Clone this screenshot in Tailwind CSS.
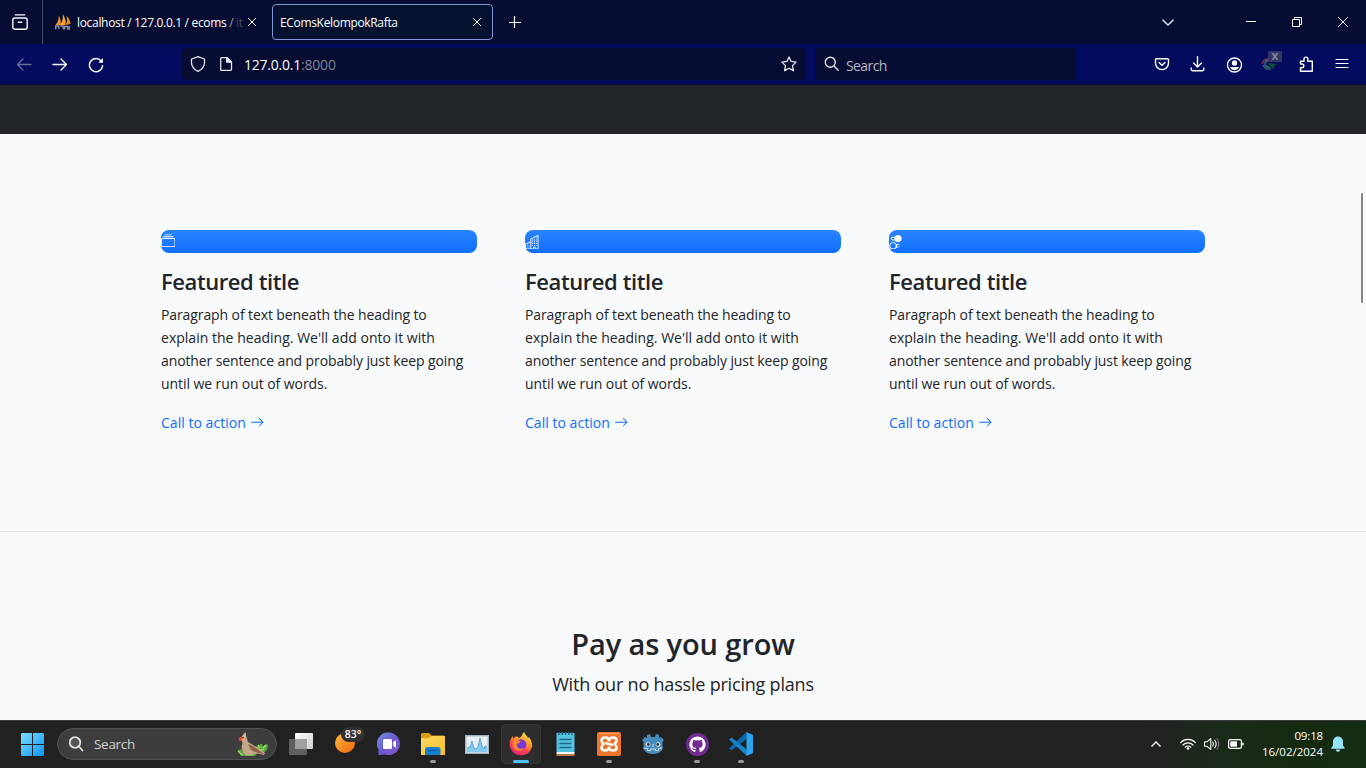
<!DOCTYPE html>
<html lang="en">
<head>
<meta charset="utf-8">
<title>EComsKelompokRafta</title>
<script src="https://cdn.jsdelivr.net/npm/@tailwindcss/browser@4"></script>
</head>
<body class="w-[1366px] h-[768px] overflow-hidden flex flex-col bg-[#f9fafc] font-['Open_Sans','Noto_Sans',sans-serif] text-[#212529]">

<svg class="hidden">
  <symbol id="x" viewBox="0 0 10 10"><path d="M1 1l8 8M9 1l-8 8" stroke="currentColor" fill="none"/></symbol>
  <symbol id="arrow" viewBox="0 0 16 16"><path fill="currentColor" fill-rule="evenodd" d="M1 8a.5.5 0 0 1 .5-.5h11.793l-3.147-3.146a.5.5 0 0 1 .708-.708l4 4a.5.5 0 0 1 0 .708l-4 4a.5.5 0 0 1-.708-.708L13.293 8.5H1.5A.5.5 0 0 1 1 8z"/></symbol>
</svg>

<!-- Tab strip -->
<header class="h-11 shrink-0 flex items-center bg-[#070c33] text-white text-[12px]">
  <div class="w-[43px] h-full border-r border-[#474b68] flex items-center pl-3">
    <svg class="w-4 h-4" viewBox="0 0 16 16" fill="none" stroke="#fbfbfe" stroke-width="1.4" stroke-linecap="round"><path d="M3.2.8h9.6" stroke-width="1.3"/><rect x=".8" y="4" width="14.4" height="11.2" rx="2"/><path d="M6.3 8.2h3.4" stroke-width="1.6"/></svg>
  </div>
  <div class="w-[221px] h-full flex items-center pl-3">
    <svg class="w-4 h-4 shrink-0" viewBox="0 0 16 16"><path d="M.5 11Q4 7 3.800 1.500 6.500 7 5.500 11z" fill="#f39324"/><path d="M5 11Q8.500 6 7.800 0 11.500 6 10.500 11z" fill="#f7a234"/><path d="M10.500 11Q12.800 7 11.500 1.500 15.500 6 15.500 10z" fill="#e28a20"/><path d="M.7 15.500v-3.500h3v3m1.500-3h3v3.500m1.500 0v-3h3v3m1.500-3.500v3h1" stroke="#9395a4" stroke-width="1.300" fill="none"/></svg>
    <div class="ml-[6px] pt-[2px] w-[165px] shrink-0 whitespace-nowrap tracking-[-0.32px]">localhost / 127.0.0.1 / ecoms<span class="text-white/60"> / </span><span class="text-white/25">it</span></div>
    <svg class="w-[10px] h-[10px] ml-[5px] shrink-0"><use href="#x"/></svg>
  </div>
  <div class="ml-2 w-[221px] h-9 rounded-[4px] border border-[#7c96d8] bg-[#05122f] flex items-center pl-[7px]">
    <span class="w-[192px] pt-[2px] tracking-[-0.33px]">EComsKelompokRafta</span>
    <svg class="w-[10px] h-[10px]"><use href="#x"/></svg>
  </div>
  <svg class="ml-4 w-3 h-3" viewBox="0 0 12 12"><path d="M5.500 0v12M0 6.500h12" stroke="#fff" stroke-width="1.200"/></svg>
  <svg class="ml-auto w-3 h-[7px]" viewBox="0 0 12 7"><path d="M.5.700L6 6 11.500.700" fill="none" stroke="#e5e6ef" stroke-width="1.400"/></svg>
  <svg class="ml-[72px] w-[10px] h-[10px]" viewBox="0 0 10 10"><path d="M0 4.500h10" stroke="#fff"/></svg>
  <svg class="ml-9 w-[10px] h-[10px]" viewBox="0 0 10 10" fill="none" stroke="#fff"><path d="M.500 2.500h7v7h-7zM2.500 2.500v-2h7v7h-2"/></svg>
  <svg class="ml-9 mr-[18px] w-[10px] h-[10px]" viewBox="0 0 10 10"><path d="M0 0l10 10M10 0L0 10" stroke="#fff" stroke-width=".900"/></svg>
</header>

<!-- Navigation bar -->
<nav class="h-[40px] shrink-0 flex items-center bg-[#030b5e] text-[14px] text-[#fbfbfe]">
  <svg class="ml-4 w-4 h-4 opacity-40" viewBox="0 0 16 16" fill="none" stroke="#fff" stroke-width="1.300" stroke-linecap="round" stroke-linejoin="round"><path d="M15 8.500H1.500M7 3L1.500 8.500 7 14"/></svg>
  <svg class="ml-5 w-4 h-4" viewBox="0 0 16 16" fill="none" stroke="#fff" stroke-width="1.300" stroke-linecap="round" stroke-linejoin="round"><path d="M1 8.500h13.500M9 3L14.500 8.500 9 14"/></svg>
  <svg class="ml-5 mt-[1px] w-4 h-4" viewBox="0 0 16 16" fill="none" stroke="#fff" stroke-width="1.400" stroke-linecap="round"><path d="M13.200 4A6.600 6.600 0 1 0 14.600 8.600"/><path d="M15 1v4.700h-4.700z" fill="#fff" stroke="none"/></svg>
  <div class="ml-[78px] w-[623px] h-8 rounded-[4px] bg-[#070c33] flex items-center pl-2">
    <svg class="w-4 h-4" viewBox="0 0 16 16" fill="none" stroke="#e4e5ee" stroke-width="1.300" stroke-linejoin="round"><path d="M8 .700l6.500 2.300v3.500c0 4-2.500 7-6.500 8.800C4 13.500 1.500 10.500 1.500 6.500V3z"/></svg>
    <svg class="ml-3 w-4 h-4" viewBox="0 0 16 16" fill="none" stroke="#e4e5ee" stroke-width="1.300" stroke-linejoin="round"><path d="M3.700 1.700H9l4.500 4.500v7.200a1 1 0 0 1-1 1H3.700a1 1 0 0 1-1-1V2.700a1 1 0 0 1 1-1z"/><path d="M8.700 1.700v4.500h4.800z" fill="#e4e5ee"/></svg>
    <span class="ml-[10px] pt-[1px] whitespace-nowrap tracking-[-0.22px]">127.0.0.1<span class="text-[#7f8298]">:8000</span></span>
    <svg class="ml-auto mr-2 w-4 h-4" viewBox="0 0 16 16" fill="none" stroke="#e4e5ee" stroke-width="1.300" stroke-linejoin="round"><path d="M8 .900l2.100 4.500 5 .700-3.600 3.500.900 5L8 12.200l-4.400 2.400.900-5L.900 6.100l5-.700z"/></svg>
  </div>
  <div class="ml-[10px] w-[261px] h-8 rounded-[4px] bg-[#070c33] flex items-center pl-[9px]">
    <svg class="w-4 h-4" viewBox="0 0 16 16" fill="none" stroke="#e4e5ee" stroke-width="1.400" stroke-linecap="round"><circle cx="6.300" cy="6.300" r="5"/><path d="M10 10l4.200 4.200"/></svg>
    <span class="ml-[6px] pt-[2px] tracking-[-0.6px] text-[14px] text-[#b4b5c2]">Search</span>
  </div>
  <svg class="ml-[78px] w-4 h-4" viewBox="0 0 16 16" fill="none" stroke="#fff" stroke-width="1.400" stroke-linecap="round" stroke-linejoin="round"><path d="M2.500 2.700h11a1 1 0 0 1 1 1v3.600a6.500 6.300 0 0 1-13 0V3.700a1 1 0 0 1 1-1zM5 6.500l3 2.800 3-2.800"/></svg>
  <svg class="ml-5 w-4 h-4" viewBox="0 0 16 16" fill="none" stroke="#fff" stroke-width="1.400" stroke-linecap="round" stroke-linejoin="round"><path d="M7.500.700v10M3.500 7l4 4 4-4M1.200 12v1.200a1.500 1.500 0 0 0 1.500 1.500h9.600a1.500 1.500 0 0 0 1.500-1.500V12"/></svg>
  <svg class="ml-5 mt-[1px] w-[17px] h-4" viewBox="0 0 16 16" fill="none" stroke="#fff"><circle cx="8" cy="8" r="7" stroke-width="1.300"/><circle cx="8" cy="6" r="2.700" fill="#fff" stroke="none"/><path d="M3.500 10h9c-.700 2-2.500 3.200-4.500 3.200S4.200 12 3.500 10z" fill="#fff" stroke="none"/></svg>
  <svg class="ml-[18px] w-[22px] h-[20px] mb-[7px]" viewBox="0 0 22 20"><path d="M7 8C4 8 1.500 10 1.500 13" stroke="#7c2c4c" stroke-width="1.800" fill="none"/><path d="M9 9Q4 9 4 13.500 5 17 9 16" fill="none" stroke="#35607d" stroke-width="1.800"/><path d="M2 14q2 5 8 4" stroke="#276057" stroke-width="1.600" fill="none"/><path d="M7 12l9 1-3 2v3.500l-4-3.500z" fill="#085333"/><rect x="7" y="0" width="14" height="11" rx="1" fill="#303563"/><text x="14" y="9" text-anchor="middle" font-family="DejaVu Sans" font-size="9.500" font-weight="700" fill="#8585ad">X</text></svg>
  <svg class="ml-[15px] w-4 h-4" viewBox="0 0 16 16" fill="none" stroke="#fff" stroke-width="1.400" stroke-linejoin="round"><path d="M2.500 8V5.200h3.500V3a1.900 1.900 0 0 1 3.800 0v2.200h4.500v10H2.500v-3.500h1.500a1.800 1.800 0 0 0 0-3.700z"/></svg>
  <svg class="ml-5 w-4 h-4" viewBox="0 0 16 16"><path d="M2 3.500h12M2 7.500h12M2 11.500h12" stroke="#fff" stroke-width="1.200" stroke-linecap="round"/></svg>
</nav>

<!-- Page -->
<main class="relative grow flex flex-col">
  <div class="h-[50px] shrink-0 bg-[#212529] border-t border-[#0c0e22]"></div>
  <section class="h-[398px] shrink-0 border-b border-[#dee2e6] px-[161px] pt-24 grid grid-cols-3 gap-x-12">
    <article>
      <div class="h-[23px] rounded-[8px] bg-linear-to-b from-[#2a84ff] to-[#0d6efd] flex items-center text-white">
        <svg class="w-[14.4px] h-[14.4px]" viewBox="0 0 16 16" fill="currentColor"><path d="M2.500 3.500a.5.500 0 0 1 0-1h11a.5.500 0 0 1 0 1h-11zm2-2a.5.500 0 0 1 0-1h7a.5.500 0 0 1 0 1h-7zM0 13a1.500 1.500 0 0 0 1.500 1.500h13A1.500 1.500 0 0 0 16 13V6a1.500 1.500 0 0 0-1.500-1.500h-13A1.500 1.500 0 0 0 0 6v7zm1.500.500A.5.500 0 0 1 1 13V6a.5.500 0 0 1 .500-.500h13a.5.500 0 0 1 .500.500v7a.5.500 0 0 1-.500.500h-13z"/></svg>
      </div>
      <h3 class="mt-[15px] h-[27px] leading-[27px] text-[22px] font-semibold whitespace-nowrap tracking-[-0.42px]">Featured title</h3>
      <p class="mt-2 text-[14px] leading-[23px] whitespace-nowrap"><span class="tracking-[-0.1px]">Paragraph of text beneath the heading to</span><br><span class="tracking-[0.02px]">explain the heading. We'll add onto it with</span><br><span class="tracking-[-0.11px]">another sentence and probably just keep going</span><br><span class="tracking-[-0.07px]">until we run out of words.</span></p>
      <a class="mt-4 flex items-center h-[23px] text-[14px] text-[#0d6efd]"><span class="tracking-[0.03px]">Call to action</span><svg class="ml-1 w-[14.4px] h-[14.4px]"><use href="#arrow"/></svg></a>
    </article>
    <article>
      <div class="h-[23px] rounded-[8px] bg-linear-to-b from-[#2a84ff] to-[#0d6efd] flex items-center text-white">
        <svg class="w-[14.4px] h-[14.4px] mt-px" viewBox="0 0 16 16" fill="currentColor"><path fill-rule="evenodd" d="M14.763.075A.5.5 0 0 1 15 .5v15a.5.5 0 0 1-.5.5h-3a.5.5 0 0 1-.5-.5V14h-1v1.500a.5.5 0 0 1-.5.5h-9a.5.5 0 0 1-.5-.5V10a.5.5 0 0 1 .342-.474L6 7.640V4.500a.5.5 0 0 1 .276-.447l8-4a.5.5 0 0 1 .487.022zM6 8.694 1 10.360V15h5V8.694zM7 15h2v-1.500a.5.5 0 0 1 .5-.5h2a.5.5 0 0 1 .5.5V15h2V1.309l-7 3.500V15z"/><path d="M2 11h1v1H2v-1zm2 0h1v1H4v-1zm-2 2h1v1H2v-1zm2 0h1v1H4v-1zm4-4h1v1H8V9zm2 0h1v1h-1V9zm-2 2h1v1H8v-1zm2 0h1v1h-1v-1zm2-2h1v1h-1V9zm0 2h1v1h-1v-1zM8 7h1v1H8V7zm2 0h1v1h-1V7zm2 0h1v1h-1V7zM8 5h1v1H8V5zm2 0h1v1h-1V5zm2 0h1v1h-1V5zm0-2h1v1h-1V3z"/></svg>
      </div>
      <h3 class="mt-[15px] h-[27px] leading-[27px] text-[22px] font-semibold whitespace-nowrap tracking-[-0.42px]">Featured title</h3>
      <p class="mt-2 text-[14px] leading-[23px] whitespace-nowrap"><span class="tracking-[-0.1px]">Paragraph of text beneath the heading to</span><br><span class="tracking-[0.02px]">explain the heading. We'll add onto it with</span><br><span class="tracking-[-0.11px]">another sentence and probably just keep going</span><br><span class="tracking-[-0.07px]">until we run out of words.</span></p>
      <a class="mt-4 flex items-center h-[23px] text-[14px] text-[#0d6efd]"><span class="tracking-[0.03px]">Call to action</span><svg class="ml-1 w-[14.4px] h-[14.4px]"><use href="#arrow"/></svg></a>
    </article>
    <article>
      <div class="h-[23px] rounded-[8px] bg-linear-to-b from-[#2a84ff] to-[#0d6efd] flex items-center text-white">
        <svg class="w-[14.4px] h-[14.4px] mt-px" viewBox="0 0 16 16" fill="currentColor"><path d="M9.465 10H12a2 2 0 1 1 0 4H9.465c.34-.588.535-1.271.535-2 0-.729-.195-1.412-.535-2z" transform="translate(-2)"/><path d="M6 15a3 3 0 1 0 0-6 3 3 0 0 0 0 6zm0 1a4 4 0 1 1 0-8 4 4 0 0 1 0 8z" transform="translate(-1.500)"/><path d="M6.535 6a3.975 3.975 0 0 1-.409-1H4a1 1 0 0 1 0-2h2.126c.091-.355.23-.69.41-1H4a2 2 0 1 0 0 4h2.535z"/><path d="M14 4a4 4 0 1 1-8 0 4 4 0 0 1 8 0z"/><path d="M9 11h3v2H9z" fill="#1a77fe"/></svg>
      </div>
      <h3 class="mt-[15px] h-[27px] leading-[27px] text-[22px] font-semibold whitespace-nowrap tracking-[-0.42px]">Featured title</h3>
      <p class="mt-2 text-[14px] leading-[23px] whitespace-nowrap"><span class="tracking-[-0.1px]">Paragraph of text beneath the heading to</span><br><span class="tracking-[0.02px]">explain the heading. We'll add onto it with</span><br><span class="tracking-[-0.11px]">another sentence and probably just keep going</span><br><span class="tracking-[-0.07px]">until we run out of words.</span></p>
      <a class="mt-4 flex items-center h-[23px] text-[14px] text-[#0d6efd]"><span class="tracking-[0.03px]">Call to action</span><svg class="ml-1 w-[14.4px] h-[14.4px]"><use href="#arrow"/></svg></a>
    </article>
  </section>
  <section class="grow flex flex-col items-center bg-[#f8f9fb] pt-[94px]">
    <h2 class="h-[35px] leading-[35px] text-[29px] font-semibold whitespace-nowrap tracking-[-0.12px]">Pay as you grow</h2>
    <p class="mt-[10px] text-[18px] leading-[27px] whitespace-nowrap tracking-[-0.2px]">With our no hassle pricing plans</p>
  </section>
  <div class="absolute right-[3px] top-[109px] w-[2px] h-[110px] rounded-full bg-[#83868a]"></div>
</main>

<!-- Taskbar -->
<footer class="h-12 shrink-0 border-t border-[#3a3c3c] bg-[linear-gradient(90deg,#212121_0%,#212121_84%,#1a2b19_90%,#15290f_95%,#132d13_100%)] text-white flex items-center pb-px">
  <svg class="ml-[21px] w-[23px] h-[23px]" viewBox="0 0 23 23"><defs><linearGradient id="win" x1="0" y1="0" x2="1" y2="1"><stop stop-color="#7adfff"/><stop offset="1" stop-color="#0a94f5"/></linearGradient></defs><path d="M1 0h10v11H0V1zM12 0h10l1 1v10H12zM0 12h11v11H1l-1-1zM12 12h11v10l-1 1H12z" fill="url(#win)"/></svg>
  <div class="ml-[13px] w-[220px] h-8 rounded-full bg-[#3d3d3d] border border-[#515151] flex items-center pl-[11px]">
    <svg class="w-4 h-4" viewBox="0 0 16 16" fill="none" stroke="#e3e3e3" stroke-width="1.800" stroke-linecap="round"><circle cx="6" cy="6.500" r="5.300" fill="#555"/><path d="M10 10.500l3.500 4"/></svg>
    <span class="ml-[9px] text-[13.5px] tracking-[-0.3px] text-[#d2d2d2]">Search</span>
    <svg class="ml-auto mr-2 w-[32px] h-[26px]" viewBox="0 0 32 26"><path d="M2 19l3-1 2 3 6-1 8-5 2 1 1-3h2l1 3 3-3 2 1-1 5-4 3-5-1-3 4H5z" fill="#58a842"/><path d="M22 14l2 3M27 17l3-3M2 20l4 4M12 22l5 2M23 20l5-2" stroke="#9ad95c" stroke-width="1.600" fill="none"/><path d="M9.500 1.500l1 4.500 1.500 5 5 3 5 3 7 5-1 2-6-1.500-5 .5-3 1.500H10l-3-3-1.500-5 1-5-2-4 2.500-3z" fill="#c5a689"/><path d="M12 13l5 2 11 8-6-1-7-3z" fill="#8f624d"/><path d="M9.500 1l-2.500 3-1 2 3 1z" fill="#dbbd98"/><path d="M2.500 7.500L5 5.500l1.500 2-1 2.500-2.500-.5z" fill="#f04c2c"/><circle cx="7" cy="6.500" r=".7" fill="#111"/></svg>
  </div>

  <div class="ml-[2px] h-full flex items-center [&>div]:w-11 [&>div]:h-full [&>div]:relative [&>div]:flex [&>div]:items-center [&>div]:justify-center">
    <div><svg class="-ml-4 w-6 h-[22px] translate-x-2" viewBox="0 0 24 22"><defs><linearGradient id="tv" x1="0" y1="0" x2="1" y2="1"><stop stop-color="#fff"/><stop offset="1" stop-color="#cfcfcf"/></linearGradient></defs><rect x="6" y="0" width="18" height="16" rx="1" fill="url(#tv)"/><rect x="0" y="6" width="18" height="16" rx="1" fill="#606060"/><path d="M6 6h12v10H6z" fill="#a0a0a0"/></svg></div>
    <div><svg class="w-[32px] h-[30px] -translate-y-[3px] translate-x-[4px]" viewBox="0 0 32 30"><defs><linearGradient id="moon" x1="0" y1="0" x2="1" y2="1"><stop stop-color="#ffbc3a"/><stop offset="1" stop-color="#ef6510"/></linearGradient></defs><circle cx="12" cy="17" r="10" fill="url(#moon)"/><path d="M10 7q-1 8 12 8" fill="#f58a20"/><rect x="8" y="1" width="24" height="15" rx="7.500" fill="#303030"/><text x="20" y="12.300" text-anchor="middle" font-family="Open Sans" font-size="10.500" font-weight="600" fill="#fff">83°</text></svg></div>
    <div><svg class="w-[24px] h-[24px]" viewBox="0 0 24 24"><defs><linearGradient id="chat" x1="0" y1="0" x2="1" y2="1"><stop stop-color="#6e95dd"/><stop offset=".5" stop-color="#6a5bd2"/><stop offset="1" stop-color="#8758c7"/></linearGradient></defs><path d="M12 .500a11.300 11.300 0 1 1-4 22L1.500 23V17.500A11.300 11.300 0 0 1 12 .500z" fill="url(#chat)"/><rect x="6" y="7" width="9" height="10" rx="1.500" fill="#fff"/><path d="M16 10.500l3-2.500v8l-3-2.500z" fill="#fff"/></svg></div>
    <div><svg class="w-6 h-[22px]" viewBox="0 0 24 22"><defs><linearGradient id="fold" x1="0" y1="0" x2="1" y2="1"><stop stop-color="#ffdc6b"/><stop offset="1" stop-color="#f9bd24"/></linearGradient></defs><path d="M0 6V1.500Q0 0 1.500 0H8l2.500 2.500H22q2 0 2 2V8z" fill="#dc9d10"/><path d="M0 5h8l2.500-2H24v19H0z" fill="url(#fold)"/><path d="M4 22v-5.500Q4 14 6.500 14h10.500q2.500 0 2.500 2.500V22z" fill="#1481d0"/><path d="M7 17.500h9" stroke="#0a5fa8" stroke-width="1.500"/></svg><i class="absolute bottom-[4px] w-1.5 h-[3px] rounded-full bg-[#999]"></i></div>
    <div><svg class="w-6 h-[19px]" viewBox="0 0 24 19"><rect x=".700" y=".700" width="22.600" height="17.600" fill="#e9eef2" stroke="#a5b2bd" stroke-width="1.400"/><path d="M2 17v-4l3-1 2-6 2 7 2 1 2-2 2-9 2 8 2 3 1-3 2 1v5z" fill="#83c8ed"/><path d="M2 13l3-1 2-6 2 7 2 1 2-2 2-9 2 8 2 3 1-3 2 1" fill="none" stroke="#3b98cf" stroke-width=".7"/></svg></div>
    <div><b class="absolute w-10 h-10 top-[3px] rounded-[4px] bg-[#2d2d2d] border border-[#353535]"></b><svg class="relative w-6 h-6" viewBox="0 0 24 24"><defs><linearGradient id="ff" x1=".8" y1="0" x2=".3" y2="1"><stop stop-color="#fff04a"/><stop offset=".4" stop-color="#ff9a2c"/><stop offset=".7" stop-color="#ff4150"/><stop offset="1" stop-color="#e72377"/></linearGradient></defs><path d="M15 0c1 3 3 3.500 4 6l1-1c3 4 4 8 2.500 11.500A11.500 11.500 0 0 1 1 15C0 10 2 6 4 4v3l2-2c2-1 3 0 4 1 3-1 3-4 5-6z" fill="url(#ff)"/><circle cx="12" cy="12.500" r="5.300" fill="#7638d8"/><path d="M4 9c3-2 5 0 8 0-1 2-3 2-4 3-1 4 3 6 7 4-3 5-10 3-11-2z" fill="#ff8a2c"/></svg><i class="absolute bottom-[4px] w-4 h-[3px] rounded-full bg-[#4cc2ff]"></i></div>
    <div><svg class="w-[19px] h-6" viewBox="0 0 19 24"><path d="M.500 1h18v19H.500z" fill="#54c1df"/><path d="M.500 20h18v2.500H.500z" fill="#f5f5f5"/><path d="M.500 22.500h18V24H.500z" fill="#c9762c"/><path d="M3 0v3M6.200 0v3M9.500 0v3M12.800 0v3M16 0v3" stroke="#176d8a" stroke-width="1.500"/><path d="M3.500 7.500h12M3.500 11.500h12M3.500 15.500h12" stroke="#136a89" stroke-width="1.600"/></svg></div>
    <div><svg class="w-6 h-6" viewBox="0 0 24 24"><rect width="24" height="24" rx="2" fill="#ee7427"/><path d="M2 1.500h20" stroke="#ffa970"/><path d="M12 9.500Q12 5.500 8 5.500 4.500 5.500 4.500 8.500 4.500 10.500 6.500 12 4.500 13.500 4.500 15.500 4.500 18.500 8 18.500 12 18.500 12 14.500M12 9.500Q12 5.500 16 5.500 19.500 5.500 19.500 8.500 19.500 10.500 17.500 12 19.500 13.500 19.500 15.500 19.500 18.500 16 18.500 12 18.500 12 14.500M9 10q0 2 3 2t3 2" fill="none" stroke="#fff" stroke-width="2.600" stroke-linejoin="round"/></svg><i class="absolute bottom-[4px] w-1.5 h-[3px] rounded-full bg-[#999]"></i></div>
    <div><svg class="w-[22px] h-[22px]" viewBox="0 0 22 22"><path d="M8 1l1 3h4l1-3 3 1v3l2-1 3 3-1.500 2v7Q18 21 11 21T1.500 16V9L0 7l3-3 2 1V2z" fill="#478cbf"/><circle cx="6" cy="11.500" r="2.300" fill="#dfe6ea"/><circle cx="16" cy="11.500" r="2.300" fill="#dfe6ea"/><circle cx="6.300" cy="11.500" r="1.400" fill="#35383c"/><circle cx="15.700" cy="11.500" r="1.400" fill="#35383c"/><path d="M11 11v3M1.500 15l4 .500v2h3V16h5v1.500h3v-2l4-.500" stroke="#dce7ee" stroke-width=".9" fill="none"/></svg></div>
    <div><svg class="w-[23px] h-[23px]" viewBox="0 0 23 23"><circle cx="11.500" cy="11.500" r="11.500" fill="#732b91"/><path d="M11.500 3.500a8 8 0 0 0-2.700 15.600c.500.100.600-.200.600-.500v-1.700c-2.200.500-2.800-1-2.800-1l-1-1.300c.8-.3 1.600.6 1.800 1 .6 1 1.700.7 2.200.5l.5-1c-2-.3-3.800-1-3.800-4 0-1 .3-1.700.9-2.300-.2-.8-.1-1.500.1-2.100.9 0 1.600.5 2.200.9a8 8 0 0 1 4 0c.6-.4 1.400-.9 2.200-.9.3.7.300 1.400.1 2.100.600.600.900 1.400.900 2.300 0 3-1.800 3.700-3.800 4 .500.400.700 1 .700 1.800v1.700c0 .3.100.6.600.5A8 8 0 0 0 11.500 3.500z" fill="#fff"/></svg><i class="absolute bottom-[4px] w-1.5 h-[3px] rounded-full bg-[#999]"></i></div>
    <div><svg class="w-6 h-6" viewBox="0 0 24 24"><path d="M0 16.500L17.500 0 18 6.500 2.500 18.500z" fill="#0b69b3"/><path d="M0 7.500l2.500-2L18 17.500V24z" fill="#1683cf"/><path d="M17.500 0L24 3v18l-6.500 3z" fill="#2ba5ee"/></svg><i class="absolute bottom-[4px] w-1.5 h-[3px] rounded-full bg-[#999]"></i></div>
  </div>

  <svg class="ml-auto w-[10px] h-[6px]" viewBox="0 0 10 6"><path d="M.500 5.500L5 1l4.500 4.500" fill="none" stroke="#fff" stroke-width="1.400"/></svg>
  <svg class="ml-[19px] w-4 h-3" viewBox="0 0 16 12" fill="none" stroke="#fff" stroke-width="1.200" stroke-linecap="round"><path d="M.800 4.500a10 10 0 0 1 14.400 0M3 7a7 7 0 0 1 10 0M5.200 9.200a4 4 0 0 1 5.600 0"/><circle cx="8" cy="10.500" r="1.300" fill="#fff" stroke="none"/></svg>
  <svg class="ml-2 w-4 h-[14px]" viewBox="0 0 16 14" fill="none" stroke="#fff" stroke-width="1.100" stroke-linejoin="round" stroke-linecap="round"><path d="M.600 4.800h2.500L6.800 1.500v11L3.100 9.300H.600zM8.800 5q1.300 2 0 4M10.800 3.200q2.700 3.800 0 7.600"/><path d="M13 1.500q3.500 5.500 0 11" stroke="#777"/></svg>
  <svg class="ml-2 w-4 h-[10px]" viewBox="0 0 16 10"><rect x=".600" y=".600" width="12.800" height="8.800" rx="1.700" fill="none" stroke="#fff" stroke-width="1.200"/><rect x="2.300" y="2.300" width="6.700" height="5.400" fill="#fff"/><path d="M14.200 3.200l1.500.800v2l-1.500.800z" fill="#fff"/></svg>
  <div class="ml-[12px] w-[67px] text-[11.5px] leading-4 whitespace-nowrap flex flex-col items-end"><span class="tracking-[-0.15px]">09:18</span><span>16/02/2024</span></div>
  <svg class="ml-[8px] mr-[21px] w-[14px] h-[16px]" viewBox="0 0 14 16"><path d="M7 .500a5 5 0 0 1 5 5v4l1.700 2.500v.700H.300V12L2 9.500v-4a5 5 0 0 1 5-5zM4.800 13.500h4.400a2.200 2.200 0 0 1-4.400 0z" fill="#93e6ff"/></svg>
</footer>
</body>
</html>
